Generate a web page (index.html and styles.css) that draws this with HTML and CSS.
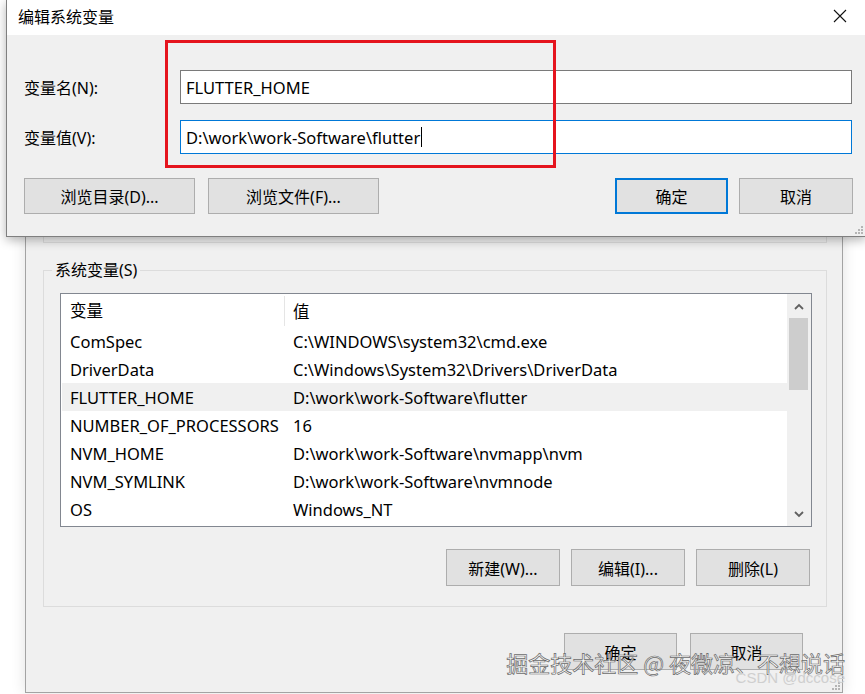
FILE: index.html
```html
<!DOCTYPE html>
<html lang="zh-CN">

<head>
    <meta charset="UTF-8">
    <meta name="viewport" content="width=device-width, initial-scale=1.0">
    <title>编辑系统变量</title>
    <link rel="stylesheet" href="styles.css">
</head>

<body>
    <div class="desk">
        <!-- back window: environment variables -->
        <div class="win env">
            <div class="user-group"></div>
            <fieldset class="sys-group">
                <legend>系统变量(S)</legend>
                <div class="list">
                    <div class="list-body">
                        <div class="list-head">
                            <div class="col-name">变量</div>
                            <div class="col-value">值</div>
                        </div>
                        <div class="row">
                            <div class="col-name">ComSpec</div>
                            <div class="col-value">C:\WINDOWS\system32\cmd.exe</div>
                        </div>
                        <div class="row">
                            <div class="col-name">DriverData</div>
                            <div class="col-value">C:\Windows\System32\Drivers\DriverData</div>
                        </div>
                        <div class="row sel">
                            <div class="col-name">FLUTTER_HOME</div>
                            <div class="col-value">D:\work\work-Software\flutter</div>
                        </div>
                        <div class="row">
                            <div class="col-name">NUMBER_OF_PROCESSORS</div>
                            <div class="col-value">16</div>
                        </div>
                        <div class="row">
                            <div class="col-name">NVM_HOME</div>
                            <div class="col-value">D:\work\work-Software\nvmapp\nvm</div>
                        </div>
                        <div class="row">
                            <div class="col-name">NVM_SYMLINK</div>
                            <div class="col-value">D:\work\work-Software\nvmnode</div>
                        </div>
                        <div class="row">
                            <div class="col-name">OS</div>
                            <div class="col-value">Windows_NT</div>
                        </div>
                    </div>
                    <div class="scrollbar">
                        <div class="sb-arrow">
                            <svg width="10" height="7" viewBox="0 0 10 7"><path d="M1 6 L5 2 L9 6" fill="none" stroke="#606060" stroke-width="1.8"/></svg>
                        </div>
                        <div class="sb-track"><div class="sb-thumb"></div></div>
                        <div class="sb-arrow">
                            <svg width="10" height="7" viewBox="0 0 10 7"><path d="M1 1 L5 5 L9 1" fill="none" stroke="#606060" stroke-width="1.8"/></svg>
                        </div>
                    </div>
                </div>
                <div class="btn-row">
                    <div class="btn">新建(W)...</div>
                    <div class="btn">编辑(I)...</div>
                    <div class="btn">删除(L)</div>
                </div>
            </fieldset>
            <div class="footer">
                <div class="btn">确定</div>
                <div class="btn">取消</div>
            </div>
            <svg class="grip" width="10" height="10" viewBox="0 0 10 10">
                <g fill="#b5b5b5"><rect x="8" y="2" width="2" height="2"/><rect x="5" y="5" width="2" height="2"/><rect x="8" y="5" width="2" height="2"/><rect x="2" y="8" width="2" height="2"/><rect x="5" y="8" width="2" height="2"/><rect x="8" y="8" width="2" height="2"/></g>
            </svg>
        </div>

        <!-- front dialog: edit system variable -->
        <div class="win edit">
            <div class="titlebar">
                <span>编辑系统变量</span>
                <svg width="14" height="14" viewBox="0 0 14 14"><path d="M1 1 L13 13 M13 1 L1 13" stroke="#111" stroke-width="1.1"/></svg>
            </div>
            <div class="edit-body">
                <div class="fields">
                    <label>变量名(N):</label>
                    <div class="input">FLUTTER_HOME</div>
                    <label>变量值(V):</label>
                    <div class="input focus">D:\work\work-Software\flutter<span class="caret"></span></div>
                </div>
                <div class="edit-buttons">
                    <div class="btn-group">
                        <div class="btn wide">浏览目录(D)...</div>
                        <div class="btn wide">浏览文件(F)...</div>
                    </div>
                    <div class="btn-group tight">
                        <div class="btn default">确定</div>
                        <div class="btn">取消</div>
                    </div>
                </div>
            </div>
            <div class="mark"></div>
            <svg class="grip" width="10" height="10" viewBox="0 0 10 10">
                <g fill="#b5b5b5"><rect x="8" y="2" width="2" height="2"/><rect x="5" y="5" width="2" height="2"/><rect x="8" y="5" width="2" height="2"/><rect x="2" y="8" width="2" height="2"/><rect x="5" y="8" width="2" height="2"/><rect x="8" y="8" width="2" height="2"/></g>
            </svg>
        </div>

        <div class="watermark">
            <div class="wm-main">掘金技术社区 @ 夜微凉、不想说话</div>
            <div class="wm-sub">CSDN @dccose</div>
        </div>
    </div>
</body>

</html>
```

FILE: styles.css
```css
body {
    margin: 0;
    background: #fff;
    font-family: "Noto Sans", "Noto Sans CJK SC", sans-serif;
    font-size: 16px;
    color: #000;
}

.desk {
    position: relative;
    width: 865px;
    height: 694px;
    overflow: hidden;
}

.win {
    position: absolute;
    box-sizing: border-box;
    background: #f0f0f0;
}

.grip {
    position: absolute;
    right: 2px;
    bottom: 2px;
}

/* back window */
.env {
    left: 25px;
    top: 0;
    width: 818px;
    height: 693px;
    border: 1px solid #a3a3a3;
    border-top: none;
    padding: 0 15px 0 17px;
    box-shadow: 0 0 14px rgba(0, 0, 0, .12);
}

.user-group {
    height: 243px;
    box-sizing: border-box;
    border: 1px solid #dcdcdc;
    border-top: none;
}

.sys-group {
    margin: 17px 0 0;
    border: 1px solid #dcdcdc;
    padding: 13px 14px 20px 16px;
    min-width: 0;
}

.sys-group legend {
    padding: 0 3px;
    margin-left: -8px;
    line-height: 20px;
}

.list {
    display: flex;
    height: 234px;
    box-sizing: border-box;
    border: 1px solid #828790;
    background: #fff;
}

.list-body {
    flex: 1;
    padding-left: 1px;
    font-size: 16.5px;
}

.list-head,
.row {
    display: flex;
    align-items: center;
    white-space: nowrap;
}

.list-head {
    height: 33px;
}

.row {
    height: 28px;
}

.row.sel {
    background: #f0f0f0;
}

.col-name {
    width: 223px;
    flex: none;
    padding-left: 8px;
    box-sizing: border-box;
}

.list-head .col-name {
    height: 30px;
    line-height: 30px;
    border-right: 1px solid #e5e5e5;
}

.col-value {
    padding-left: 8px;
}

.scrollbar {
    width: 24px;
    background: #f0f0f0;
    display: flex;
    flex-direction: column;
}

.sb-arrow {
    height: 24px;
    display: flex;
    align-items: center;
    justify-content: center;
}

.sb-track {
    flex: 1;
    padding: 0 3px 0 2px;
}

.sb-thumb {
    height: 72px;
    background: #cdcdcd;
}

.btn {
    width: 114px;
    height: 37px;
    box-sizing: border-box;
    border: 1px solid #adadad;
    background: #e1e1e1;
    display: flex;
    align-items: center;
    justify-content: center;
}

.btn-row {
    display: flex;
    justify-content: flex-end;
    gap: 11px;
    margin-top: 22px;
    padding-right: 2px;
}

.footer {
    display: flex;
    justify-content: flex-end;
    gap: 13px;
    margin-top: 26px;
    padding-right: 24px;
}

.footer .btn {
    width: 113px;
}

/* front dialog */
.edit {
    left: 6px;
    top: 0;
    width: 860px;
    height: 237px;
    border: 1px solid #7f7f7f;
    border-top: none;
    box-shadow: 0 3px 10px rgba(0, 0, 0, .3);
}

.titlebar {
    height: 35px;
    box-sizing: border-box;
    padding: 0 18px 3px 11px;
    background: #fff;
    display: flex;
    align-items: center;
    justify-content: space-between;
}

.edit-body {
    padding: 35px 12px 0 17px;
}

.fields {
    display: grid;
    grid-template-columns: 156px 672px;
    row-gap: 16px;
    align-items: center;
}

.input {
    height: 34px;
    box-sizing: border-box;
    border: 1px solid #7a7a7a;
    background: #fff;
    padding-left: 5px;
    display: flex;
    align-items: center;
    font-size: 16.5px;
}

.input.focus {
    border-color: #0078d7;
}

.caret {
    display: inline-block;
    width: 1px;
    height: 20px;
    margin-left: 1px;
    background: #000;
}

.edit-buttons {
    display: flex;
    justify-content: space-between;
    margin-top: 24px;
}

.btn-group {
    display: flex;
    gap: 13px;
}

.btn-group.tight {
    gap: 11px;
}

.edit-buttons .btn {
    height: 36px;
}

.btn.wide {
    width: 171px;
}

.btn.default {
    width: 113px;
    border: 2px solid #0078d7;
}

.mark {
    position: absolute;
    left: 158px;
    top: 40px;
    width: 391px;
    height: 128px;
    box-sizing: border-box;
    border: 3px solid #e5141e;
}

/* watermark */
.watermark {
    position: absolute;
    right: 20px;
    top: 648px;
    text-align: right;
    font-family: "Noto Sans CJK SC", sans-serif;
}

.wm-main {
    font-size: 22px;
    line-height: 28px;
    color: rgba(255, 255, 255, .75);
    -webkit-text-stroke: .7px #6a6a6a;
}

.wm-sub {
    margin-top: -7px;
    font-family: "Liberation Sans", sans-serif;
    font-size: 15px;
    line-height: 18px;
    color: #cfcfcf;
}
```
